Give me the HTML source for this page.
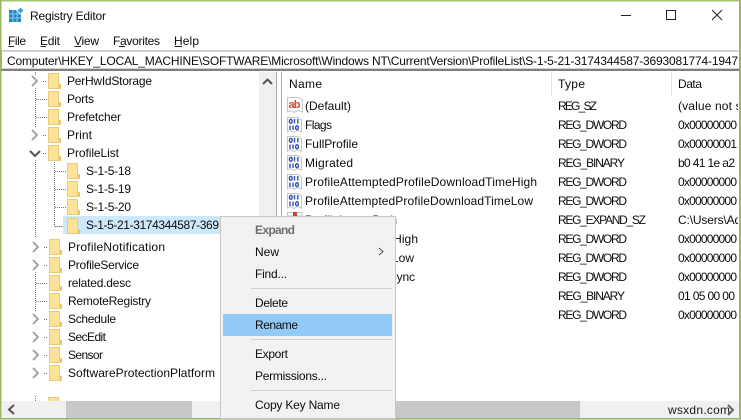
<!DOCTYPE html>
<html><head><meta charset="utf-8"><title>Registry Editor</title>
<style>
html,body{margin:0;padding:0;background:#fff;width:741px;height:420px;overflow:hidden}
svg{display:block}
text{font-family:"Liberation Sans",sans-serif;font-size:12px;fill:#0c0c0c}
.g{fill:#6d6d6d;font-weight:bold}
</style></head><body>
<svg width="741" height="420" viewBox="0 0 741 420" xmlns="http://www.w3.org/2000/svg">
<defs>
<g id="f"><path d="M0.5 0.5H10.5V11.5H12.5V15.5H0.5Z" fill="#fde397" stroke="#e8cc7c"/><path d="M10.5 11.5V15.5H12.5V11.5Z" fill="#e8c468"/></g>
<path id="cr" d="M0 0L5 5L0 10" fill="none" stroke="#a6a6a6" stroke-width="2"/>
<g id="bin"><path d="M0.5 0.5H11L14.5 3V15L11 13.5L7 15.5L3 13.5L0.5 15Z" fill="#fff" stroke="#c4c4c4"/><g fill="none" stroke="#2f4fb8" stroke-width="1.400"><ellipse cx="3.800" cy="4.300" rx="1.400" ry="2"/><path d="M7.500 2V6.500M10.800 2V6.500"/><path d="M3 8.500V13M6 8.500V13"/><ellipse cx="10" cy="10.700" rx="1.400" ry="2"/></g></g>
<clipPath id="c1"><rect x="3" y="52" width="735" height="17"/></clipPath>
<clipPath id="c2"><rect x="282" y="72" width="456" height="328"/></clipPath>
</defs>

<!-- window frame -->
<rect width="741" height="420" fill="#fff"/>
<rect x="0" y="0" width="741" height="1.500" fill="#a9c56f"/>
<rect x="0" y="0" width="1.500" height="420" fill="#9db768"/>
<rect x="739" y="0" width="2" height="420" fill="#9db768"/>
<rect x="0" y="418" width="741" height="1.500" fill="#9db768"/>
<rect x="0" y="419.500" width="741" height="0.500" fill="#e8e8e8"/>

<!-- title -->
<g>
<rect x="9" y="10" width="12" height="12" fill="#1f87c9"/>
<path d="M9 14H21M9 18H21M13 10V22M17 10V22" stroke="#8fcbec" stroke-width="1"/>
<rect x="18" y="8" width="5" height="5" fill="#3aa0dc" stroke="#fff" stroke-width="0.800" transform="rotate(45 20.500 10.500)"/>
</g>
<text x="30" y="20" textLength="76">Registry Editor</text>
<path d="M621 15.500H631" stroke="#222" stroke-width="1"/>
<rect x="666.500" y="10.500" width="9" height="9" fill="none" stroke="#222"/>
<path d="M712 10L722 20M722 10L712 20" stroke="#222" stroke-width="1"/>

<!-- menu -->
<text x="8" y="45" textLength="18">File</text>
<text x="40" y="45" textLength="20">Edit</text>
<text x="74" y="45" textLength="25">View</text>
<text x="113" y="45" textLength="47">Favorites</text>
<text x="174" y="45" textLength="25">Help</text>
<path d="M8.500 46.500H14M40.500 46.500H46M74.500 46.500H81M119 46.500H125M174.500 46.500H182" stroke="#222"/>

<!-- address bar -->
<rect x="1.500" y="51" width="738" height="18" fill="#fff" stroke="#a4a4a4"/>
<rect x="1.500" y="69" width="738" height="2" fill="#7f7f7f"/>
<text x="7" y="65" textLength="731" clip-path="url(#c1)">Computer\HKEY_LOCAL_MACHINE\SOFTWARE\Microsoft\Windows NT\CurrentVersion\ProfileList\S-1-5-21-3174344587-3693081774-1947</text>

<!-- tree guides -->
<g stroke="#777" stroke-dasharray="1 1" fill="none" shape-rendering="crispEdges">
<path d="M35.500 72V75M35.500 88V128M35.500 160V238M35.500 272V312M35.500 396V401"/>
<path d="M36 99.500H47M36 117.500H47M43 81.500H47M43 135.500H47M43 153.500H47"/>
<path d="M54.500 160V226M55 171.500H66M55 189.500H66M55 207.500H66M55 226.500H66"/>
<path d="M44 247.500H48M44 265.500H48M36 283.500H48M36 301.500H48M44 319.500H48M44 337.500H48M44 355.500H48M44 373.500H48"/>
</g>

<!-- selection -->
<rect x="63" y="216" width="157" height="18" fill="#cde8fb"/>
<path d="M54.500 226.500H63" stroke="#777" stroke-dasharray="1 1"/>

<!-- tree chevrons -->
<use href="#cr" x="32" y="76"/>
<use href="#cr" x="32" y="130"/>
<path d="M30 151L35 156L40 151" fill="none" stroke="#555" stroke-width="2"/>
<use href="#cr" x="33" y="242"/>
<use href="#cr" x="33" y="260"/>
<use href="#cr" x="33" y="314"/>
<use href="#cr" x="33" y="332"/>
<use href="#cr" x="33" y="350"/>
<use href="#cr" x="33" y="368"/>

<!-- tree folders -->
<use href="#f" x="48" y="73"/>
<use href="#f" x="48" y="91"/>
<use href="#f" x="48" y="109"/>
<use href="#f" x="48" y="127"/>
<use href="#f" x="48" y="145"/>
<use href="#f" x="67" y="163"/>
<use href="#f" x="67" y="181"/>
<use href="#f" x="67" y="199"/>
<use href="#f" x="67" y="218"/>
<use href="#f" x="49" y="239"/>
<use href="#f" x="49" y="257"/>
<use href="#f" x="49" y="275"/>
<use href="#f" x="49" y="293"/>
<use href="#f" x="49" y="311"/>
<use href="#f" x="49" y="329"/>
<use href="#f" x="49" y="347"/>
<use href="#f" x="49" y="365"/>
<use href="#f" x="48" y="397"/>

<!-- tree text -->
<text x="67" y="85" textLength="85">PerHwIdStorage</text>
<text x="67" y="103" textLength="27">Ports</text>
<text x="67" y="121" textLength="54">Prefetcher</text>
<text x="67" y="139" textLength="25">Print</text>
<text x="67" y="157" textLength="52">ProfileList</text>
<text x="86" y="175" textLength="45">S-1-5-18</text>
<text x="86" y="193" textLength="45">S-1-5-19</text>
<text x="86" y="211" textLength="45">S-1-5-20</text>
<text x="86" y="229" textLength="133">S-1-5-21-3174344587-369</text>
<text x="68" y="251" textLength="97">ProfileNotification</text>
<text x="68" y="269" textLength="71">ProfileService</text>
<text x="68" y="287" textLength="63">related.desc</text>
<text x="68" y="305" textLength="83">RemoteRegistry</text>
<text x="68" y="323" textLength="48">Schedule</text>
<text x="68" y="341" textLength="38">SecEdit</text>
<text x="68" y="359" textLength="35">Sensor</text>
<text x="68" y="377" textLength="147">SoftwareProtectionPlatform</text>

<!-- tree v-scroll strip and h-scroll -->
<rect x="259" y="72" width="17" height="329" fill="#f0f0f0"/>
<path d="M263 84L267.500 79.500L272 84" fill="none" stroke="#555" stroke-width="2"/>
<path d="M276.500 72V418M281.500 72V418" stroke="#a8a8a8"/>
<rect x="2" y="401" width="274" height="17" fill="#f0f0f0"/>
<rect x="66" y="401" width="126" height="17" fill="#c8c8c8"/>
<path d="M14 405L9 409.500L14 414" fill="none" stroke="#555" stroke-width="2"/>

<!-- list header -->
<text x="289" y="88" textLength="33">Name</text>
<text x="558" y="88" textLength="27">Type</text>
<text x="678" y="88" textLength="24">Data</text>
<path d="M551.500 72V96M671.500 72V96" stroke="#e4e4e4"/>

<!-- list icons -->
<g>
<path d="M287.500 97.500H298L302.500 100V112L298 110.500L294 112.500L290 110.500L287.500 112Z" fill="#fff" stroke="#c4c4c4"/>
<text x="288.500" y="108" style="font-size:11px;font-weight:bold;fill:#d0492a" textLength="12">ab</text>
</g>
<use href="#bin" x="287" y="117"/>
<use href="#bin" x="287" y="136"/>
<use href="#bin" x="287" y="155"/>
<use href="#bin" x="287" y="174"/>
<use href="#bin" x="287" y="193"/>
<path d="M287.500 212.500H302V216H287.500Z" fill="#fff" stroke="#c4c4c4"/>
<rect x="293" y="212" width="4" height="4" fill="#c8452a"/>

<!-- list rows -->
<g clip-path="url(#c2)">
<text x="305" y="110" textLength="46">(Default)</text>
<text x="305" y="129" textLength="27">Flags</text>
<text x="305" y="148" textLength="53">FullProfile</text>
<text x="305" y="167" textLength="48">Migrated</text>
<text x="305" y="186" textLength="232">ProfileAttemptedProfileDownloadTimeHigh</text>
<text x="305" y="205" textLength="228">ProfileAttemptedProfileDownloadTimeLow</text>
<text x="305" y="224" textLength="92">ProfileImagePath</text>
<text x="305" y="243" textLength="113">ProfileLoadTimeHigh</text>
<text x="305" y="262" textLength="109">ProfileLoadTimeLow</text>
<text x="305" y="281" textLength="110">RunLogonScriptSync</text>
<text x="305" y="300" textLength="20">Sid</text>
<text x="305" y="319" textLength="29">State</text>

<text x="558" y="110" textLength="39">REG_SZ</text>
<text x="558" y="129" textLength="69">REG_DWORD</text>
<text x="558" y="148" textLength="69">REG_DWORD</text>
<text x="558" y="167" textLength="67">REG_BINARY</text>
<text x="558" y="186" textLength="69">REG_DWORD</text>
<text x="558" y="205" textLength="69">REG_DWORD</text>
<text x="558" y="224" textLength="88">REG_EXPAND_SZ</text>
<text x="558" y="243" textLength="69">REG_DWORD</text>
<text x="558" y="262" textLength="69">REG_DWORD</text>
<text x="558" y="281" textLength="69">REG_DWORD</text>
<text x="558" y="300" textLength="67">REG_BINARY</text>
<text x="558" y="319" textLength="69">REG_DWORD</text>

<text x="678" y="110" textLength="78">(value not set)</text>
<text x="678" y="129" textLength="59">0x00000000</text>
<text x="678" y="148" textLength="59">0x00000001</text>
<text x="678" y="167" textLength="57">b0 41 1e a2</text>
<text x="678" y="186" textLength="59">0x00000000</text>
<text x="678" y="205" textLength="59">0x00000000</text>
<text x="678" y="224" textLength="82">C:\Users\Admin</text>
<text x="678" y="243" textLength="59">0x00000000</text>
<text x="678" y="262" textLength="59">0x00000000</text>
<text x="678" y="281" textLength="59">0x00000000</text>
<text x="678" y="300" textLength="57">01 05 00 00</text>
<text x="678" y="319" textLength="59">0x00000000</text>
</g>

<!-- list h-scroll -->
<rect x="282" y="401" width="457" height="17" fill="#f0f0f0"/>
<rect x="282" y="401" width="298" height="17" fill="#c8c8c8"/>
<text x="668" y="414" textLength="62" style="font-size:12px;fill:#1a1a1a">wsxdn.com</text>
<path d="M728 405L733 410L728 415" fill="none" stroke="#666" stroke-width="2"/>

<!-- context menu -->
<rect x="220.500" y="216.500" width="175" height="202" fill="#f2f2f2" stroke="#c6c6c6"/>
<rect x="223" y="314" width="169" height="22" fill="#91c9f7"/>
<path d="M251 288.500H392M251 339.500H392M251 390.500H392" stroke="#d0d0d0"/>
<text x="255" y="234" class="g" textLength="40">Expand</text>
<text x="255" y="256" textLength="24">New</text>
<text x="255" y="278" textLength="32">Find...</text>
<text x="255" y="307" textLength="33">Delete</text>
<text x="255" y="329" textLength="43">Rename</text>
<text x="255" y="358" textLength="33">Export</text>
<text x="255" y="380" textLength="72">Permissions...</text>
<text x="255" y="409" textLength="85">Copy Key Name</text>
<path d="M379 248L383 251.500L379 255" fill="none" stroke="#444" stroke-width="1"/>
</svg>
</body></html>
